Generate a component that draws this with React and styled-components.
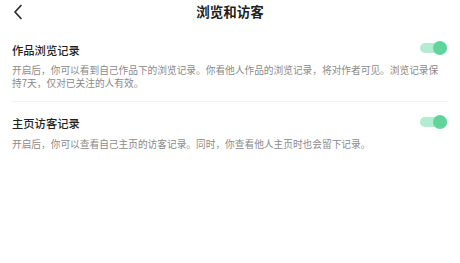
import React from 'react';
import styled, { createGlobalStyle } from 'styled-components';

const GlobalStyle = createGlobalStyle`
    html, body {
        margin: 0;
        padding: 0;
        background: #ffffff;
    }
    body {
        font-family: "Noto Sans CJK SC", "Noto Sans", sans-serif;
    }
`;

const settings = [
    {
        title: '作品浏览记录',
        desc: '开启后，你可以看到自己作品下的浏览记录。你看他人作品的浏览记录，将对作者可见。浏览记录保持7天，仅对已关注的人有效。',
        on: true,
    },
    {
        title: '主页访客记录',
        desc: '开启后，你可以查看自己主页的访客记录。同时，你查看他人主页时也会留下记录。',
        on: true,
    },
];

function App(){
    return (
        <Page>
            <GlobalStyle/>
            <Header>
                <BackButton>
                    <svg width="10" height="16" viewBox="0 0 10 16">
                        <path d="M8 1.5 L2 8 L8 14.5" fill="none" stroke="#2a2a2a" strokeWidth="1.7" strokeLinecap="round" strokeLinejoin="round"/>
                    </svg>
                </BackButton>
                <Title>浏览和访客</Title>
            </Header>
            <List>
                {settings.map((s, i) => (
                    <Item key={s.title} $last={i === settings.length - 1}>
                        <ItemHead>
                            <ItemTitle>{s.title}</ItemTitle>
                            <Toggle $on={s.on}><Knob/></Toggle>
                        </ItemHead>
                        <Desc>{s.desc}</Desc>
                    </Item>
                ))}
            </List>
        </Page>
    )
}

const Page = styled.div`
    width: 460px;
    height: 263px;
    background: #fff;
`;

const Header = styled.div`
    position: relative;
    height: 26.5px;
    display: flex;
    align-items: center;
    justify-content: center;
`;

const BackButton = styled.div`
    position: absolute;
    left: 13px;
    top: 4px;
    display: flex;
`;

const Title = styled.div`
    font-size: 13.5px;
    font-weight: 600;
    color: #1f1f1f;
    line-height: 16px;
    margin-top: -4px;
`;

const List = styled.div`
    padding: 0 12px;
`;

const Item = styled.div`
    padding: 15px 0 12px;
    border-bottom: ${p => p.$last ? 'none' : '1px solid #f3f3f3'};
    & + & {
        padding-top: 13px;
    }
`;

const ItemHead = styled.div`
    display: flex;
    align-items: center;
    justify-content: space-between;
`;

const ItemTitle = styled.div`
    font-size: 11.3px;
    font-weight: 500;
    color: #1f1f1f;
    line-height: 16px;
`;

const Toggle = styled.div`
    position: relative;
    width: 27px;
    height: 10px;
    margin-right: 1px;
    margin-bottom: 3px;
    border-radius: 5px;
    background: ${p => p.$on ? '#b3edd1' : '#e5e5e5'};
`;

const Knob = styled.div`
    position: absolute;
    right: 0;
    top: -2px;
    width: 14px;
    height: 14px;
    border-radius: 50%;
    background: #5fd59a;
`;

const Desc = styled.div`
    margin-top: 6.5px;
    width: 434px;
    font-size: 9.7px;
    line-height: 12.5px;
    color: #8a8a8a;
`;

export default App;
